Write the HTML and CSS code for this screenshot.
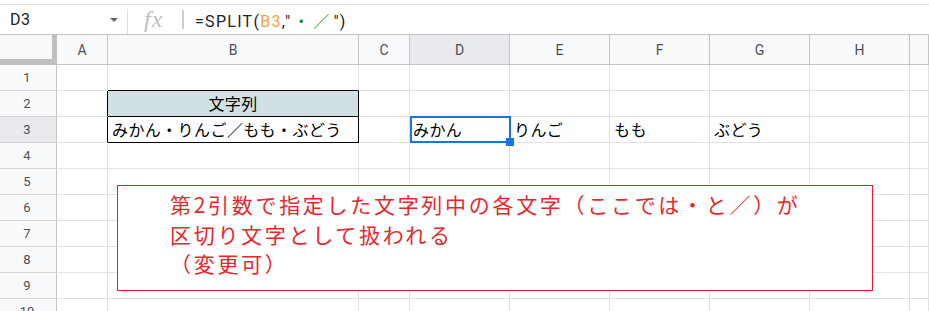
FILE: index.html
```html
<!DOCTYPE html>
<html lang="ja">
<head>
    <meta charset="UTF-8">
    <title>SPLIT</title>
    <link rel="stylesheet" href="styles.css">
</head>
<body>
    <div class="formula-bar">
        <div class="name-box">
            <span class="cell-ref">D3</span>
            <svg class="drop" width="8" height="4" viewBox="0 0 8 4"><path d="M0 0h8L4 4z" fill="#666"/></svg>
        </div>
        <span class="fx">fx</span>
        <span class="fx-sep"></span>
        <div class="formula">=SPLIT(<span class="ref">B3</span>,"<span class="str">・／</span>")</div>
    </div>

    <div class="sheet">
        <div class="row head">
            <div class="corner"></div>
            <div class="ch">A</div>
            <div class="ch">B</div>
            <div class="ch">C</div>
            <div class="ch sel">D</div>
            <div class="ch">E</div>
            <div class="ch">F</div>
            <div class="ch">G</div>
            <div class="ch">H</div>
            <div class="ch"></div>
        </div>
        <div class="row">
            <div class="rh">1</div>
            <div class="c"></div><div class="c bb"></div><div class="c"></div><div class="c"></div>
            <div class="c"></div><div class="c"></div><div class="c"></div><div class="c"></div><div class="c"></div>
        </div>
        <div class="row">
            <div class="rh">2</div>
            <div class="c br"></div>
            <div class="c br bb title">文字列</div>
            <div class="c"></div><div class="c"></div>
            <div class="c"></div><div class="c"></div><div class="c"></div><div class="c"></div><div class="c"></div>
        </div>
        <div class="row">
            <div class="rh sel">3</div>
            <div class="c br"></div>
            <div class="c br bb">みかん・りんご／もも・ぶどう</div>
            <div class="c"></div>
            <div class="c active">みかん<span class="handle"></span></div>
            <div class="c">りんご</div>
            <div class="c">もも</div>
            <div class="c">ぶどう</div>
            <div class="c"></div><div class="c"></div>
        </div>
        <div class="row">
            <div class="rh">4</div>
            <div class="c"></div><div class="c"></div><div class="c"></div><div class="c"></div>
            <div class="c"></div><div class="c"></div><div class="c"></div><div class="c"></div><div class="c"></div>
        </div>
        <div class="row">
            <div class="rh">5</div>
            <div class="c"></div><div class="c"></div><div class="c"></div><div class="c"></div>
            <div class="c"></div><div class="c"></div><div class="c"></div><div class="c"></div><div class="c"></div>
        </div>
        <div class="row">
            <div class="rh">6</div>
            <div class="c"></div><div class="c"></div><div class="c"></div><div class="c"></div>
            <div class="c"></div><div class="c"></div><div class="c"></div><div class="c"></div><div class="c"></div>
        </div>
        <div class="row">
            <div class="rh">7</div>
            <div class="c"></div><div class="c"></div><div class="c"></div><div class="c"></div>
            <div class="c"></div><div class="c"></div><div class="c"></div><div class="c"></div><div class="c"></div>
        </div>
        <div class="row">
            <div class="rh">8</div>
            <div class="c"></div><div class="c"></div><div class="c"></div><div class="c"></div>
            <div class="c"></div><div class="c"></div><div class="c"></div><div class="c"></div><div class="c"></div>
        </div>
        <div class="row">
            <div class="rh">9</div>
            <div class="c"></div><div class="c"></div><div class="c"></div><div class="c"></div>
            <div class="c"></div><div class="c"></div><div class="c"></div><div class="c"></div><div class="c"></div>
        </div>
        <div class="row">
            <div class="rh">10</div>
            <div class="c"></div><div class="c"></div><div class="c"></div><div class="c"></div>
            <div class="c"></div><div class="c"></div><div class="c"></div><div class="c"></div><div class="c"></div>
        </div>

        <!-- 図形（テキストボックス） -->
        <div class="note">第2引数で指定した文字列中の各文字（ここでは・と／）が<br>区切り文字として扱われる<br>（変更可）</div>
    </div>
</body>
</html>
```

FILE: styles.css
```css
html, body {
    margin: 0;
    height: 311px;
    overflow: hidden;
    background: #fff;
}
body {
    font-family: Roboto, "Noto Sans CJK JP", sans-serif;
    color: #000;
}
.formula-bar {
    margin-top: 4px;
    height: 29px;
    border-top: 1px solid #e1e1e1;
    border-bottom: 1px solid #c4c4c4;
    display: flex;
    align-items: center;
}
.name-box {
    width: 128px;
    height: 25px;
    box-sizing: border-box;
    padding-left: 10px;
    padding-right: 9px;
    border-right: 1px solid #e0e0e0;
    display: flex;
    align-items: center;
    justify-content: space-between;
    margin-top: 3px;
}
.cell-ref {
    font-size: 16px;
    letter-spacing: 0.5px;
    color: #202124;
    margin-top: -3px;
}
.drop {
    margin-top: -3px;
}
.fx {
    margin-left: 16px;
    font-family: "Liberation Serif", serif;
    font-style: italic;
    font-size: 24px;
    color: #c0c0c0;
    letter-spacing: 1px;
    width: 28px;
}
.fx-sep {
    width: 2px;
    height: 19px;
    background: #cdcdcd;
    margin-left: 10px;
}
.formula {
    margin-left: 11px;
    font-size: 16px;
    letter-spacing: 1.3px;
    color: #202124;
    white-space: nowrap;
}
.formula .ref {
    color: #f29f3f;
}
.formula .str {
    color: #17901b;
    font-family: "Noto Sans CJK JP", sans-serif;
    font-size: 16px;
    letter-spacing: 4px;
    margin-left: 2px;
}

.sheet {
    position: relative;
}
.row {
    display: grid;
    grid-template-columns: 57px 51px 251px 51px 100px 100px 100px 100px 100px 1fr;
    height: 26px;
}
.row.head {
    height: 30px;
}
.row > div {
    box-sizing: border-box;
}
.corner {
    background: #f8f9fa;
    border-right: 5px solid #bfbfbf;
    border-bottom: 6px solid #bfbfbf;
}
.ch {
    background: #f8f9fa;
    border-right: 1px solid #c4c4c4;
    border-bottom: 1px solid #c4c4c4;
    font-size: 14px;
    color: #4d5156;
    display: flex;
    align-items: center;
    justify-content: center;
    padding-top: 1px;
}
.ch.sel, .rh.sel {
    background: #e8eaed;
}
.rh {
    background: #f8f9fa;
    border-right: 1px solid #c4c4c4;
    border-bottom: 1px solid #d4d4d4;
    font-size: 13px;
    color: #4d5156;
    display: flex;
    align-items: center;
    justify-content: center;
    padding-right: 2px;
}
.c {
    position: relative;
    border-right: 1px solid #e2e2e3;
    border-bottom: 1px solid #e2e2e3;
    font-family: "Noto Sans CJK JP", sans-serif;
    font-size: 16px;
    letter-spacing: 0.4px;
    line-height: 25px;
    padding: 0 4px;
    white-space: nowrap;
}
.c.br {
    border-right-color: #000;
}
.c.bb {
    border-bottom-color: #000;
}
.c.title {
    background: #d0e0e3;
    text-align: center;
}
.c.active {
    padding-left: 3px;
}
.c.active::after {
    content: "";
    position: absolute;
    top: -1px;
    left: 0;
    width: 101px;
    height: 27px;
    box-sizing: border-box;
    border: 2px solid #1a73e8;
}
.handle {
    position: absolute;
    left: 96px;
    top: 21px;
    width: 8px;
    height: 8px;
    background: #1a73e8;
    z-index: 1;
}

.note {
    position: absolute;
    left: 117px;
    top: 150px;
    width: 756px;
    height: 106px;
    box-sizing: border-box;
    border: 1px solid #e41f26;
    background: #fff;
    padding: 4px 0 0 52px;
    font-family: "Noto Sans CJK JP", sans-serif;
    font-size: 21px;
    letter-spacing: 2.7px;
    line-height: 29.5px;
    color: #e8262c;
    white-space: nowrap;
}
```
